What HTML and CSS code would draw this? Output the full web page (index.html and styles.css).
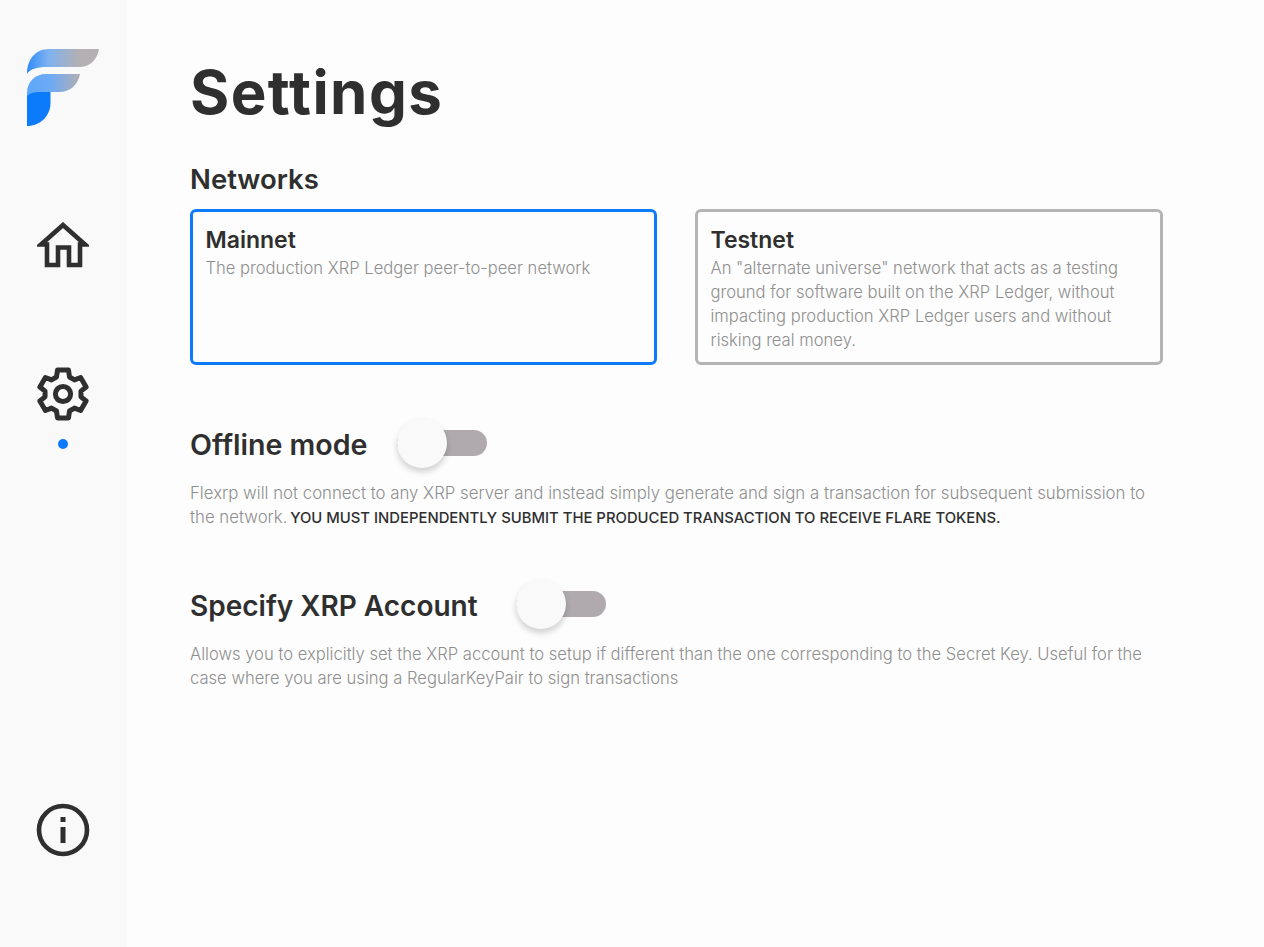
FILE: index.html
```html
<!DOCTYPE html>
<html lang="en">
<head>
    <meta charset="UTF-8">
    <meta name="viewport" content="width=device-width, initial-scale=1.0">
    <title>Settings</title>
    <link rel="stylesheet" href="styles.css">
</head>
<body>
    <nav class="sidebar">
        <svg class="logo" width="72" height="77" viewBox="27 49 72 77">
            <defs>
                <linearGradient id="wing" x1="27" x2="99" y1="0" y2="0" gradientUnits="userSpaceOnUse">
                    <stop offset="0" stop-color="#2f8cf8"/>
                    <stop offset="0.3" stop-color="#7fb2f0"/>
                    <stop offset="0.72" stop-color="#b4b0b4"/>
                    <stop offset="1" stop-color="#b4b0b2"/>
                </linearGradient>
                <linearGradient id="mid" x1="27" x2="80" y1="0" y2="0" gradientUnits="userSpaceOnUse">
                    <stop offset="0" stop-color="#5da8fa"/>
                    <stop offset="0.45" stop-color="#6eaaf5"/>
                    <stop offset="1" stop-color="#b2aeb2"/>
                </linearGradient>
            </defs>
            <path fill="url(#wing)" d="M27 74 C27 60 35 49 49 49 H99 C97 60 90 67 79 67 H46 C37 67 30 69 27 74Z"/>
            <path fill="url(#mid)" d="M27 126 V93 C27 82 35 74 46 74 H80 C78 85 70 92 59 92 H50 L27 100Z"/>
            <path fill="#0c7bfb" d="M27 126 V96 C30 93 34 92 40 92 H50.5 V103 C50.5 116 40 126 27 126Z"/>
        </svg>

        <a href="#" class="nav-item nav-home">
            <svg width="52" height="46" viewBox="0 0 52 46" fill="none" stroke="#2f2f2f" stroke-width="4.6" stroke-miterlimit="8">
                <path d="M26 3 L4 22.5 H10 V43 H21 V25.5 H32 V43 H43 V22.5 H48 Z"/>
            </svg>
        </a>

        <a href="#" class="nav-item nav-settings">
            <svg width="52" height="54" viewBox="-26 -27 52 54" fill="none" stroke="#2f2f2f" stroke-width="5" stroke-linejoin="round">
                <path d="M-6.5 -17 L-5.5 -24 H5.5 L6.5 -17 L11.47 -14.13 L17.6 -16.51 L23.1 -6.99 L17.97 -2.87 V2.87 L23.1 6.99 L17.6 16.51 L11.47 14.13 L6.5 17 L5.5 24 H-5.5 L-6.5 17 L-11.47 14.13 L-17.6 16.51 L-23.1 6.99 L-17.97 2.87 V-2.87 L-23.1 -6.99 L-17.6 -16.51 L-11.47 -14.13 Z"/>
                <circle r="7.6"/>
            </svg>
            <span class="nav-dot"></span>
        </a>

        <a href="#" class="nav-item nav-info">
            <svg width="54" height="54" viewBox="0 0 54 54" fill="none">
                <circle cx="27" cy="27" r="24" stroke="#2f2f2f" stroke-width="4.6"/>
                <rect x="24.5" y="14" width="5" height="5" fill="#2f2f2f"/>
                <rect x="24.5" y="24" width="5" height="16" fill="#2f2f2f"/>
            </svg>
        </a>
    </nav>

    <main class="content">
        <h1 class="page-title">Settings</h1>

        <h2 class="section-title networks-title">Networks</h2>
        <div class="network-list">
            <div class="network-card selected">
                <h3>Mainnet</h3>
                <p>The production XRP Ledger peer-to-peer network</p>
            </div>
            <div class="network-card">
                <h3>Testnet</h3>
                <p>An "alternate universe" network that acts as a testing<br>ground for software built on the XRP Ledger, without<br>impacting production XRP Ledger users and without<br>risking real money.</p>
            </div>
        </div>

        <section class="option option-offline">
            <div class="option-head">
                <h2 class="section-title">Offline mode</h2>
                <span class="toggle"><span class="knob"></span></span>
            </div>
            <p class="option-text">Flexrp will not connect to any XRP server and instead simply generate and sign a transaction for subsequent submission to<br>the network. <strong>YOU MUST INDEPENDENTLY SUBMIT THE PRODUCED TRANSACTION TO RECEIVE FLARE TOKENS.</strong></p>
        </section>

        <section class="option option-account">
            <div class="option-head">
                <h2 class="section-title">Specify XRP Account</h2>
                <span class="toggle"><span class="knob"></span></span>
            </div>
            <p class="option-text">Allows you to explicitly set the XRP account to setup if different than the one corresponding to the Secret Key. Useful for the<br>case where you are using a RegularKeyPair to sign transactions</p>
        </section>
    </main>
</body>
</html>
```

FILE: styles.css
```css
body {
    font-family: "Inter", "Open Sans", sans-serif;
    display: flex;
    height: 100vh;
    margin: 0;
    background-color: #fdfdfd;
    color: #2f2f2f;
    overflow: hidden;
}
.sidebar {
    width: 127px;
    flex-shrink: 0;
    box-sizing: border-box;
    padding: 49px 0 90px;
    background-color: #f9f9f9;
    display: flex;
    flex-direction: column;
    align-items: center;
}
.logo {
    display: block;
    margin-right: 1px;
}
.nav-item {
    display: flex;
    flex-direction: column;
    align-items: center;
    margin-right: 1px;
    text-decoration: none;
}
.nav-item svg {
    display: block;
}
.nav-home {
    margin-top: 96px;
}
.nav-settings {
    margin-top: 99px;
}
.nav-dot {
    width: 10px;
    height: 10px;
    border-radius: 50%;
    background-color: #0c7bfb;
    margin-top: 18px;
}
.nav-info {
    margin-top: auto;
}
.content {
    flex: 1;
    padding: 54px 101px 0 63px;
}
.page-title {
    font-size: 60px;
    line-height: 76px;
    font-weight: 700;
    letter-spacing: 1.4px;
    margin: 0 0 30px;
}
.section-title {
    font-size: 28px;
    line-height: 38px;
    font-weight: 600;
    margin: 0;
}
.networks-title {
    font-size: 27.5px;
}
.network-list {
    display: grid;
    grid-template-columns: 467px 468px;
    gap: 38px;
    margin-top: 11px;
}
.network-card {
    box-sizing: border-box;
    height: 156px;
    padding: 13px 12.5px;
    border: 3px solid #b4b4b4;
    border-radius: 6px;
}
.network-card.selected {
    border-color: #0c7bfb;
}
.network-card h3 {
    font-size: 23px;
    line-height: 30px;
    font-weight: 600;
    margin: 0 0 1px;
}
.network-card p {
    font-size: 16.6px;
    font-weight: 300;
    line-height: 24px;
    color: #8f8f8f;
    margin: 0;
}
.option-offline {
    margin-top: 54px;
}
.option-offline .section-title {
    font-size: 28.6px;
}
.option-account {
    margin-top: 50px;
}
.option-head {
    display: flex;
    align-items: center;
    height: 52px;
}
.option-text {
    font-size: 16.8px;
    font-weight: 300;
    line-height: 24px;
    color: #8f8f8f;
    margin: 10px 0 0;
}
.option-account .option-text {
    font-size: 16.6px;
}
.option-text strong {
    font-size: 14.85px;
    font-weight: 500;
    color: #2f2f2f;
    margin-left: -2px;
}
.toggle {
    position: relative;
    width: 90px;
    height: 26px;
    margin-left: 29px;
    margin-top: -4px;
    border-radius: 13px;
    background-color: #b0aaae;
}
.option-account .toggle {
    margin-left: 38px;
}
.knob {
    position: absolute;
    left: 0;
    top: -12px;
    width: 50px;
    height: 50px;
    border-radius: 50%;
    background-color: #f9f9f9;
    box-shadow: 0 4px 6px rgba(0, 0, 0, 0.18);
}
```
